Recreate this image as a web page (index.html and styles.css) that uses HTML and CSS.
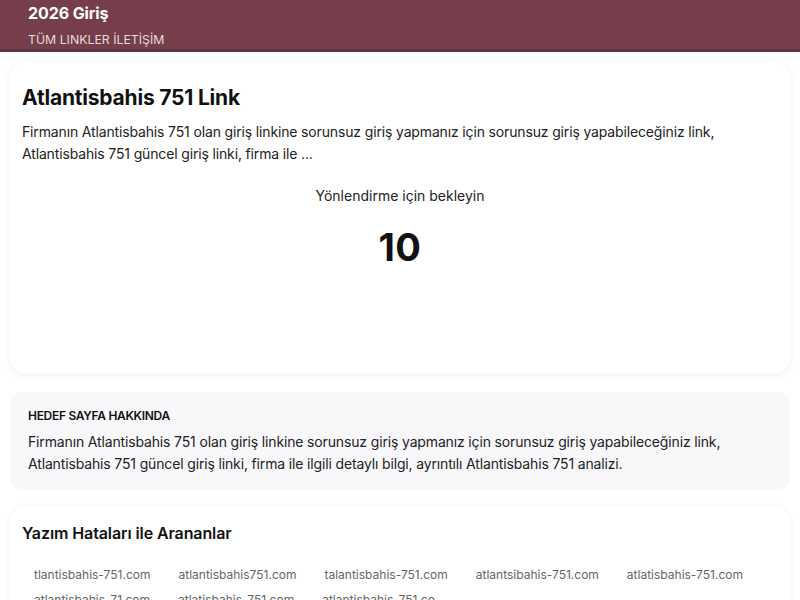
FILE: index.html
```html
<!DOCTYPE html>
<html lang="tr">
<head>
<meta charset="utf-8">
<title>Atlantisbahis 751 Link</title>
<link rel="stylesheet" href="styles.css">
</head>
<body>
<header class="site-header">
  <div class="brand">2026 Giriş</div>
  <nav class="nav"><a href="#">TÜM LINKLER</a> <a href="#">İLETİŞİM</a></nav>
</header>
<main class="main">
  <section class="card redirect">
    <h1 class="title">Atlantisbahis 751 Link</h1>
    <p class="lead">Firmanın Atlantisbahis 751 olan giriş linkine sorunsuz giriş yapmanız için sorunsuz giriş yapabileceğiniz link, Atlantisbahis 751 güncel giriş linki, firma ile ...</p>
    <div class="wait">Yönlendirme için bekleyin</div>
    <div class="count">10</div>
    <div class="spacer"></div>
  </section>
  <section class="about">
    <h2 class="about-title">HEDEF SAYFA HAKKINDA</h2>
    <p class="about-text">Firmanın Atlantisbahis 751 olan giriş linkine sorunsuz giriş yapmanız için sorunsuz giriş yapabileceğiniz link, Atlantisbahis 751 güncel giriş linki, firma ile ilgili detaylı bilgi, ayrıntılı Atlantisbahis 751 analizi.</p>
  </section>
  <section class="card typos">
    <h2 class="typos-title">Yazım Hataları ile Arananlar</h2>
    <ul class="tags">
      <li>tlantisbahis-751.com</li>
      <li>atlantisbahis751.com</li>
      <li>talantisbahis-751.com</li>
      <li>atlantsibahis-751.com</li>
      <li>atlatisbahis-751.com</li>
      <li>atlantisbahis-71.com</li>
      <li>atlatisbahis-751.com</li>
      <li>atlantisbahis-751.co</li>
    </ul>
  </section>
</main>
</body>
</html>
```
FILE: styles.css
```css
* { box-sizing: border-box; }
html, body { margin: 0; padding: 0; }
body {
  font-family: Inter, "Noto Sans", "DejaVu Sans", sans-serif;
  color: #111;
  background: #fff;
}
.site-header {
  background: #763e4b;
  border-bottom: 3px solid #5b3448;
  padding: 2px 28px 0;
  height: 52px;
}
.brand {
  color: #fff;
  font-size: 16px;
  font-weight: 700;
  line-height: 22px;
  letter-spacing: -0.1px;
}
.nav {
  margin-top: 9px;
  font-size: 12.3px;
  line-height: 14px;
  color: #e9d9dd;
}
.nav a { color: #e9d9dd; text-decoration: none; }
.main {
  padding: 10px 10px 0;
}
.card {
  background: #fff;
  border-radius: 16px;
  box-shadow: 0 1px 6px rgba(0,0,0,0.07);
}
.redirect {
  padding: 22px 12px 0;
  height: 312px;
}
.title {
  margin: 0;
  font-size: 21px;
  font-weight: 700;
  line-height: 28px;
  letter-spacing: -0.2px;
}
.lead {
  margin: 9px 0 0;
  font-size: 14px;
  line-height: 22px;
  color: #222;
  letter-spacing: -0.15px;
}
.wait {
  margin-top: 20px;
  text-align: center;
  font-size: 14px;
  line-height: 22px;
  color: #222;
}
.count {
  margin-top: 17px;
  text-align: center;
  font-size: 38px;
  font-weight: 700;
  line-height: 46px;
  letter-spacing: 0.5px;
}
.about {
  margin-top: 18px;
  background: #f8f8fb;
  border-radius: 12px;
  padding: 16px 18px 15px;
}
.about-title {
  margin: 0;
  font-size: 12px;
  font-weight: 600;
  line-height: 16px;
  letter-spacing: -0.3px;
  color: #111;
}
.about-text {
  margin: 7px 0 0;
  font-size: 14px;
  line-height: 22px;
  color: #222;
  letter-spacing: -0.15px;
}
.typos {
  margin-top: 16px;
  padding: 15px 12px 0;
  height: 120px;
}
.typos-title {
  margin: 0;
  font-size: 16px;
  font-weight: 600;
  line-height: 24px;
  letter-spacing: -0.1px;
}
.tags {
  list-style: none;
  margin: 20px 0 0;
  padding: 0;
  display: flex;
  flex-wrap: wrap;
  column-gap: 4px;
  row-gap: 5px;
}
.tags li {
  font-size: 12px;
  line-height: 16px;
  padding: 2px 12px;
  color: #666;
}
```
